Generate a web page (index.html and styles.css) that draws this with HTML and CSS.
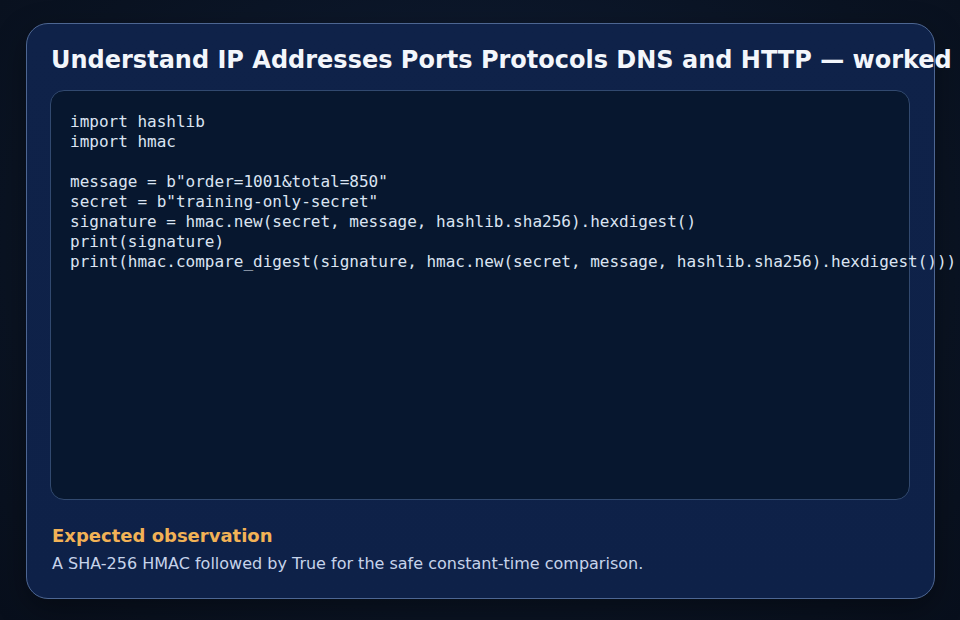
FILE: index.html
```html
<!DOCTYPE html>
<html>
<head>
<meta charset="utf-8">
<link rel="stylesheet" href="styles.css">
</head>
<body>
<div class="card">
  <h1 class="title">Understand IP Addresses Ports Protocols DNS and HTTP — worked</h1>
  <pre class="code">import hashlib
import hmac

message = b"order=1001&amp;total=850"
secret = b"training-only-secret"
signature = hmac.new(secret, message, hashlib.sha256).hexdigest()
print(signature)
print(hmac.compare_digest(signature, hmac.new(secret, message, hashlib.sha256).hexdigest()))</pre>
  <div class="obs">
    <h2 class="obs-title">Expected observation</h2>
    <p class="obs-text">A SHA-256 HMAC followed by True for the safe constant-time comparison.</p>
  </div>
</div>
</body>
</html>
```
FILE: styles.css
```css
html, body {
  margin: 0;
  padding: 0;
}
body {
  width: 960px;
  height: 620px;
  overflow: hidden;
  background: radial-gradient(ellipse at 50% 40%, #0f1d36 0%, #0a1322 70%, #080f1c 100%);
  font-family: "DejaVu Sans", sans-serif;
  padding: 23px 25px 21px 26px;
  box-sizing: border-box;
}
.card {
  height: 576px;
  box-sizing: border-box;
  border: 1px solid #4d6692;
  border-radius: 22px;
  background: linear-gradient(180deg, #0f2249 0%, #0e2148 100%);
  padding: 20px 24px 24px 23px;
  display: flex;
  flex-direction: column;
  box-shadow: 0 10px 30px rgba(0,0,0,0.35);
}
.title {
  margin: 0 0 0 1px;
  font-size: 24px;
  line-height: 32px;
  font-weight: bold;
  color: #f3f6fb;
  white-space: nowrap;
}
.code {
  margin: 14px 0 0 0;
  height: 411px;
  box-sizing: border-box;
  border: 1px solid #31496f;
  border-radius: 14px;
  background: #07172f;
  padding: 21px 19px;
  font-family: "DejaVu Sans Mono", monospace;
  font-size: 16px;
  line-height: 20px;
  color: #dbe4f2;
  white-space: pre;
  overflow: visible;
}
.obs {
  margin-top: 24px;
  padding-left: 2px;
}
.obs-title {
  margin: 0;
  font-size: 18px;
  line-height: 24px;
  font-weight: bold;
  color: #f2b256;
}
.obs-text {
  margin: 6px 0 0 0;
  font-size: 16px;
  line-height: 20px;
  color: #c6d3ea;
}
```
